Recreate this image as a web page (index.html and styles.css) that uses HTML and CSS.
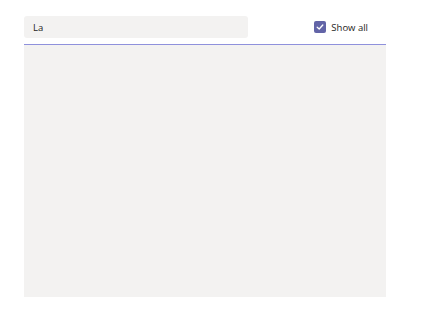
FILE: index.html
```html
<!DOCTYPE html>
<html lang="en">
<head>
    <meta charset="UTF-8">
    <meta name="viewport" content="width=device-width, initial-scale=1.0">
    <title>Picker</title>
    <link rel="stylesheet" href="styles.css">
</head>
<body>
    <div class="picker">
        <div class="toolbar">
            <input class="search" type="text" value="La">
            <label class="show-all">
                <span class="check">
                    <svg width="8" height="8" viewBox="0 0 8 8"><path d="M1.2 4.2 L3.2 6 L6.8 2" fill="none" stroke="#fff" stroke-width="1.3" stroke-linecap="round" stroke-linejoin="round"/></svg>
                </span>
                Show all
            </label>
        </div>
        <div class="results"></div>
    </div>
</body>
</html>
```

FILE: styles.css
```css
body {
    margin: 0;
    background-color: #fff;
    font-family: 'Open Sans', 'Noto Sans', sans-serif;
    color: #252423;
}

.picker {
    width: 362px;
    padding: 16px 0 0 24px;
}

.toolbar {
    display: flex;
    align-items: center;
    justify-content: space-between;
    height: 22px;
    padding-bottom: 6px;
    border-bottom: 1px solid #8f91dc;
}

.search {
    box-sizing: border-box;
    width: 224px;
    height: 22px;
    margin: 0;
    padding: 0 9px;
    border: none;
    border-radius: 3px;
    background-color: #f3f2f1;
    font-family: inherit;
    font-size: 9.5px;
    color: #252423;
    outline: none;
}

.show-all {
    display: flex;
    align-items: center;
    gap: 5px;
    margin-right: 18px;
    font-size: 9.5px;
    color: #252423;
}

.check {
    display: flex;
    align-items: center;
    justify-content: center;
    width: 12px;
    height: 12px;
    border-radius: 2px;
    background-color: #6264a7;
}

.results {
    height: 252px;
    background-color: #f3f2f1;
}
```
